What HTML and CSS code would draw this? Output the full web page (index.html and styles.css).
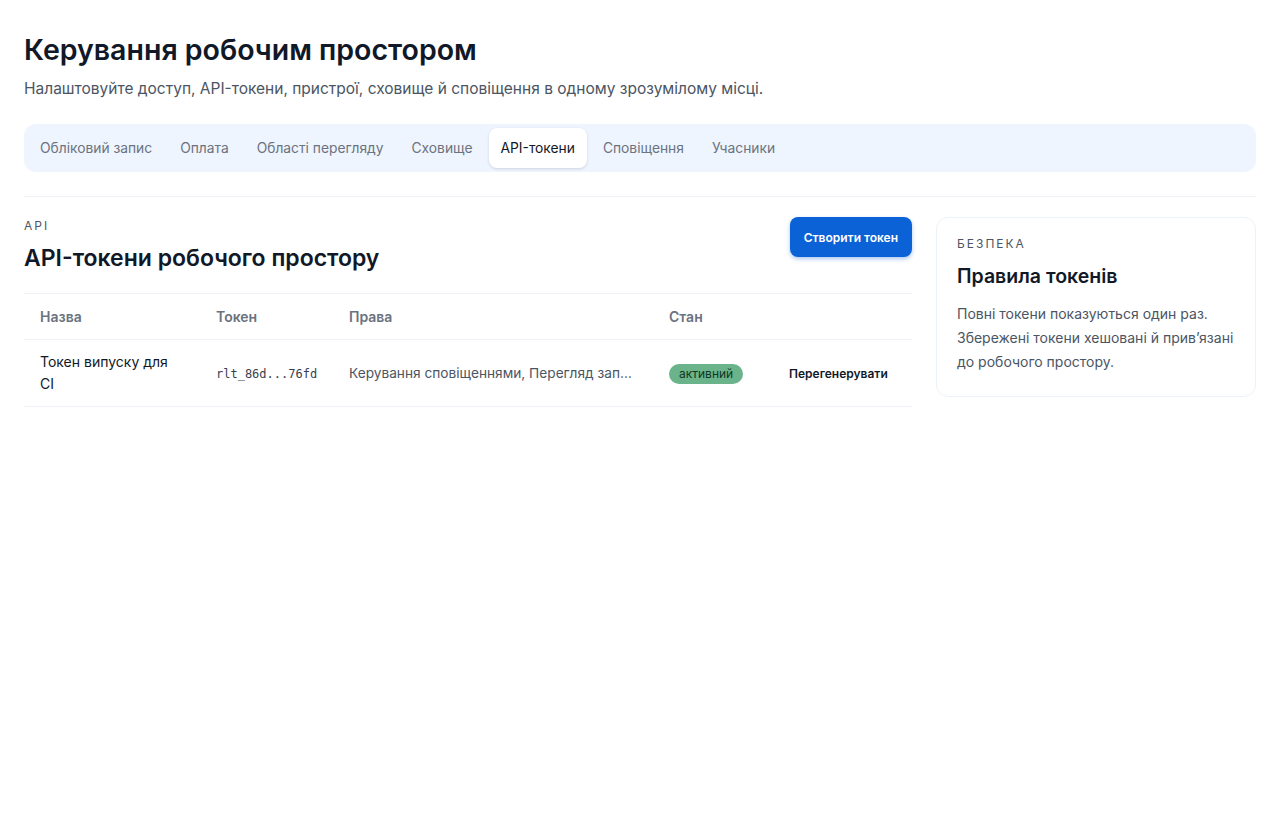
FILE: index.html
```html
<!DOCTYPE html>
<html lang="uk">

<head>
    <meta charset="UTF-8">
    <meta name="viewport" content="width=device-width, initial-scale=1.0">
    <title>Керування робочим простором</title>
    <link rel="stylesheet" href="styles.css">
</head>

<body>

    <header class="page-head">
        <h1>Керування робочим простором</h1>
        <p>Налаштовуйте доступ, API-токени, пристрої, сховище й сповіщення в одному зрозумілому місці.</p>
    </header>

    <nav class="tabs">
        <a href="#">Обліковий запис</a>
        <a href="#">Оплата</a>
        <a href="#">Області перегляду</a>
        <a href="#">Сховище</a>
        <a href="#" class="active">API-токени</a>
        <a href="#">Сповіщення</a>
        <a href="#">Учасники</a>
    </nav>

    <div class="content">
        <section class="main">
            <div class="section-head">
                <div class="titles">
                    <p class="eyebrow">API</p>
                    <h2>API-токени робочого простору</h2>
                </div>
                <button class="primary">Створити токен</button>
            </div>

            <table class="tokens">
                <colgroup>
                    <col style="width: 176px">
                    <col style="width: 133px">
                    <col style="width: 320px">
                    <col style="width: 120px">
                    <col>
                </colgroup>
                <thead>
                    <tr>
                        <th>Назва</th>
                        <th>Токен</th>
                        <th>Права</th>
                        <th>Стан</th>
                        <th></th>
                    </tr>
                </thead>
                <tbody>
                    <tr>
                        <td class="name">Токен випуску для CI</td>
                        <td><code>rlt_86d...76fd</code></td>
                        <td class="perms"><span>Керування сповіщеннями, Перегляд записів</span></td>
                        <td><span class="badge">активний</span></td>
                        <td><a href="#" class="action">Перегенерувати</a></td>
                    </tr>
                </tbody>
            </table>
        </section>

        <aside class="card">
            <p class="eyebrow">Безпека</p>
            <h3>Правила токенів</h3>
            <p class="card-text">Повні токени показуються один раз. Збережені токени хешовані й прив’язані до робочого простору.</p>
        </aside>
    </div>

</body>

</html>
```

FILE: styles.css
```css
body {
    margin: 0;
    padding: 32px 24px;
    background: #ffffff;
    font-family: Inter, "Noto Sans", sans-serif;
    color: #111827;
}

.page-head h1 {
    margin: 0;
    font-size: 28.5px;
    line-height: 36px;
    font-weight: 600;
    color: #111827;
}

.page-head p {
    margin: 9px 0 0;
    font-size: 15.5px;
    line-height: 24px;
    color: #4b5563;
}

.tabs {
    margin-top: 23px;
    display: flex;
    gap: 4px;
    padding: 4px;
    background: #eff5fe;
    border-radius: 12px;
}

.tabs a {
    padding: 0 12px;
    height: 40px;
    line-height: 40px;
    font-size: 13.8px;
    color: #6b7280;
    text-decoration: none;
    border-radius: 8px;
}

.tabs a.active {
    background: #ffffff;
    color: #111827;
    box-shadow: 0 1px 3px rgba(15, 23, 42, 0.15);
}

.content {
    margin-top: 24px;
    border-top: 1px solid #eef2f7;
    padding-top: 20px;
    display: flex;
    gap: 24px;
    align-items: flex-start;
}

.main {
    flex: 1;
}

.section-head {
    display: flex;
    justify-content: space-between;
    align-items: flex-start;
}

.titles {
    padding-top: 1px;
}

.eyebrow {
    margin: 0;
    font-size: 12px;
    line-height: 16px;
    letter-spacing: 2px;
    text-transform: uppercase;
    color: #4b5563;
}

.section-head h2 {
    margin: 8px 0 0;
    font-size: 23px;
    line-height: 32px;
    font-weight: 600;
    color: #111827;
}

.primary {
    height: 40px;
    padding: 0 14px;
    border: 0;
    border-radius: 8px;
    background: #0b62d6;
    color: #ffffff;
    font-family: inherit;
    font-size: 12px;
    font-weight: 600;
    box-shadow: 0 2px 4px rgba(11, 98, 214, 0.35);
}

.tokens {
    margin-top: 19px;
    width: 100%;
    border-collapse: collapse;
    table-layout: fixed;
    font-size: 14px;
}

.tokens th {
    text-align: left;
    font-weight: 600;
    color: #6b7280;
    height: 45px;
    padding: 0 16px;
    border-top: 1px solid #eef2f7;
    border-bottom: 1px solid #eef2f7;
}

.tokens td {
    height: 66px;
    padding: 0 16px;
    border-bottom: 1px solid #eef2f7;
    line-height: 22px;
    color: #4b5563;
}

.tokens td.name {
    color: #111827;
    padding-right: 24px;
}

.tokens code {
    font-family: "DejaVu Sans Mono", "Liberation Mono", monospace;
    font-size: 12px;
    color: #374151;
}

.perms span {
    display: block;
    white-space: nowrap;
    overflow: hidden;
    text-overflow: ellipsis;
    font-size: 13.7px;
}

.badge {
    display: inline-block;
    padding: 0 10px;
    height: 20px;
    line-height: 20px;
    border-radius: 10px;
    background: #6bb38a;
    color: #10361f;
    font-size: 12px;
}

.action {
    font-size: 12px;
    font-weight: 600;
    color: #111827;
    text-decoration: none;
}

.card {
    width: 320px;
    box-sizing: border-box;
    padding: 18px 20px 22px;
    border: 1px solid #edf2f9;
    border-radius: 12px;
}

.card h3 {
    margin: 10px 0 0;
    font-size: 19.5px;
    line-height: 28px;
    font-weight: 600;
    color: #111827;
}

.card-text {
    margin: 12px 0 0;
    font-size: 14px;
    line-height: 24px;
    color: #4b5563;
}
```
